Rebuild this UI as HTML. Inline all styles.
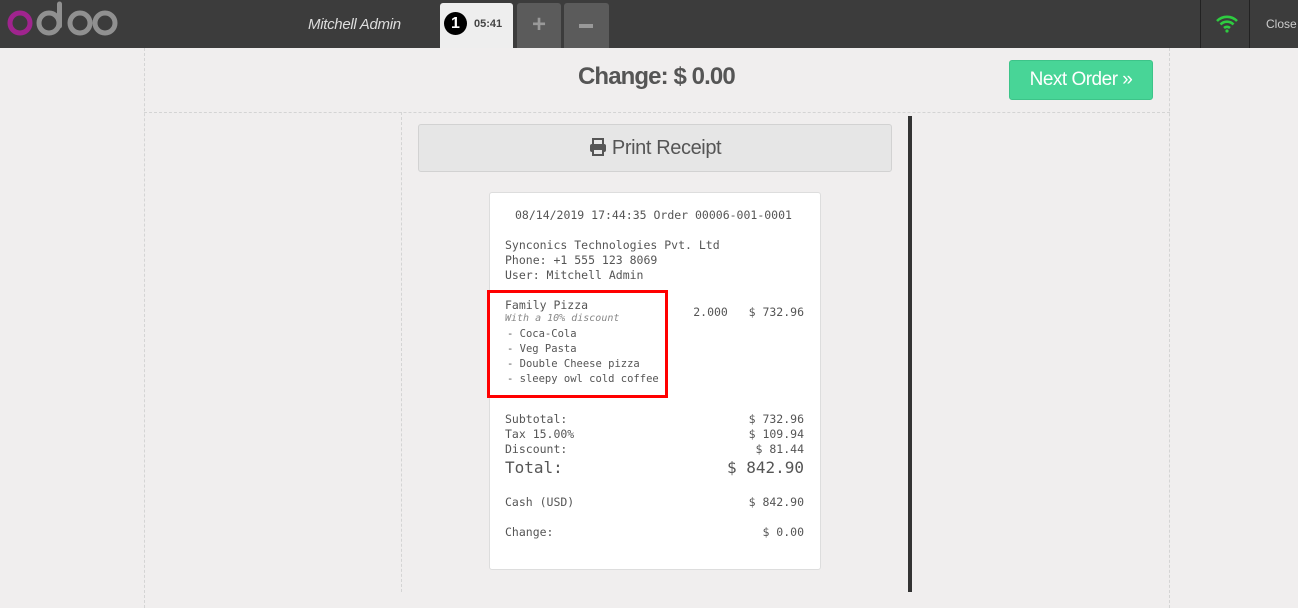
<!DOCTYPE html>
<html><head><meta charset="utf-8"><style>
*{margin:0;padding:0;box-sizing:border-box}
body{width:1298px;height:592px;overflow:hidden;background:#f0eeee;font-family:"Liberation Sans",sans-serif;position:relative}
.hdr{position:absolute;left:0;top:0;width:1298px;height:48px;background:#3c3c3c}
.abs{position:absolute}
.mono{font-family:"DejaVu Sans Mono","Liberation Mono",monospace;font-size:11.5px;color:#555;white-space:pre}
</style></head><body>
<div class="hdr">
<svg class="abs" style="left:0;top:0" width="130" height="48">
<circle cx="20" cy="23" r="10" fill="none" stroke="#a0248e" stroke-width="5"/>
<circle cx="49" cy="23" r="10" fill="none" stroke="#909090" stroke-width="5"/>
<line x1="59.5" y1="4" x2="59.5" y2="26" stroke="#909090" stroke-width="5" stroke-linecap="round"/>
<circle cx="80" cy="23" r="10" fill="none" stroke="#909090" stroke-width="5"/>
<circle cx="105" cy="23" r="10" fill="none" stroke="#909090" stroke-width="5"/>
</svg>
<div class="abs" style="left:308px;top:16px;color:#ddd;font-style:italic;font-size:15px;letter-spacing:-0.3px">Mitchell Admin</div>
<div class="abs" style="left:440px;top:3px;width:73px;height:45px;background:#eeeeee;border-radius:3px 3px 0 0"></div>
<div class="abs" style="left:444px;top:12px;width:23px;height:23px;border-radius:50%;background:#000;color:#fff;font-weight:bold;font-size:16px;text-align:center;line-height:23px">1</div>
<div class="abs" style="left:474px;top:18px;font-size:11px;font-weight:bold;color:#444">05:41</div>
<div class="abs" style="left:517px;top:3px;width:44px;height:45px;background:#5b5b5b;border-radius:3px 3px 0 0;color:#999;font-size:24px;font-weight:bold;text-align:center;line-height:44px">+</div>
<div class="abs" style="left:564px;top:3px;width:45px;height:45px;background:#5b5b5b;border-radius:3px 3px 0 0"><div class="abs" style="left:15px;top:21px;width:14px;height:4px;background:#999"></div></div>
<div class="abs" style="left:1200px;top:0;width:1px;height:48px;background:#222"></div>
<div class="abs" style="left:1249px;top:0;width:1px;height:48px;background:#222"></div>
<svg class="abs" style="left:1215px;top:13px" width="24" height="20" viewBox="0 0 24 20">
<path d="M2 8 A14 14 0 0 1 22 8" fill="none" stroke="#2ecc40" stroke-width="2.6"/>
<path d="M5.5 11.5 A9 9 0 0 1 18.5 11.5" fill="none" stroke="#2ecc40" stroke-width="2.6"/>
<path d="M9 15 A4.5 4.5 0 0 1 15 15" fill="none" stroke="#2ecc40" stroke-width="2.6"/>
<circle cx="12" cy="18" r="1.6" fill="#2ecc40"/>
</svg>
<div class="abs" style="left:1266px;top:17px;color:#ccc;font-size:12px">Close</div>
</div>
<div class="abs" style="left:144px;top:48px;width:1026px;height:560px;border-left:1px dashed #d4d4d4;border-right:1px dashed #d4d4d4"></div>
<div class="abs" style="left:144px;top:112px;width:1026px;border-top:1px dashed #d4d4d4"></div>
<div class="abs" style="left:401px;top:112px;height:480px;border-left:1px dashed #d4d4d4"></div>
<div class="abs" style="left:578px;top:63px;font-size:24px;font-weight:bold;color:#555;letter-spacing:-0.9px">Change: $ 0.00</div>
<div class="abs" style="left:1009px;top:60px;width:144px;height:40px;background:#48d597;border:1px solid #3dc489;border-radius:3px;color:#fff;font-size:19px;text-align:center;line-height:38px;letter-spacing:-0.5px">Next Order »</div>
<div class="abs" style="left:418px;top:124px;width:474px;height:48px;background:#e6e6e6;border:1px solid #d2d2d2;border-radius:3px;color:#555;font-size:20px;text-align:center;line-height:46px;letter-spacing:-0.4px">
<svg width="18" height="18" viewBox="0 0 18 18" style="vertical-align:-2px"><rect x="4" y="1" width="10" height="6" fill="none" stroke="#555" stroke-width="2"/><rect x="1" y="6" width="16" height="8" rx="2" fill="#555"/><rect x="4" y="11" width="10" height="6" fill="#e6e6e6" stroke="#555" stroke-width="2"/></svg> Print Receipt</div>
<div class="abs" style="left:908px;top:116px;width:4px;height:476px;background:#333"></div>
<div class="abs" style="left:489px;top:192px;width:332px;height:378px;background:#fff;border:1px solid #ddd;border-radius:3px">
<div class="mono abs" style="left:25px;top:15px">08/14/2019 17:44:35 Order 00006-001-0001</div>
<div class="mono abs" style="left:15px;top:45px;line-height:15px">Synconics Technologies Pvt. Ltd
Phone: +1 555 123 8069
User: Mitchell Admin</div>
<div class="mono abs" style="left:15px;top:105px">Family Pizza</div>
<div class="mono abs" style="left:15px;top:120px;font-size:10px;font-style:italic;color:#888">With a 10% discount</div>
<div class="mono abs" style="left:17px;top:134px;font-size:10.5px;line-height:15px">- Coca-Cola
- Veg Pasta
- Double Cheese pizza
- sleepy owl cold coffee</div>
<div class="mono abs" style="right:16px;top:112px">2.000   $ 732.96</div>
<div class="abs" style="left:-3px;top:97px;width:181px;height:108px;border:3px solid #f00"></div>
<div class="mono abs" style="left:15px;top:219px;line-height:15px">Subtotal:
Tax 15.00%
Discount:</div>
<div class="mono abs" style="right:16px;top:219px;line-height:15px;text-align:right">$ 732.96
$ 109.94
$ 81.44</div>
<div class="mono abs" style="left:15px;top:265px;font-size:16px">Total:</div>
<div class="mono abs" style="right:16px;top:265px;font-size:16px">$ 842.90</div>
<div class="mono abs" style="left:15px;top:302px">Cash (USD)</div>
<div class="mono abs" style="right:16px;top:302px">$ 842.90</div>
<div class="mono abs" style="left:15px;top:332px">Change:</div>
<div class="mono abs" style="right:16px;top:332px">$ 0.00</div>
</div>
</body></html>
